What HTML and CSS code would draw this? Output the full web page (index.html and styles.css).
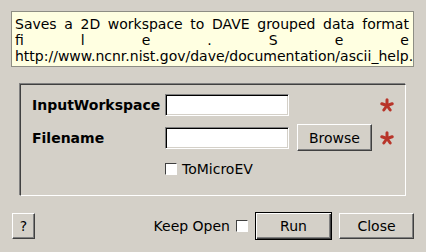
FILE: index.html
```html
<!DOCTYPE html>
<html>
<head>
<meta charset="utf-8">
<link rel="stylesheet" href="styles.css">
</head>
<body>
<div class="dialog">
  <div class="desc">
    <div class="line"><span>Saves</span><span>a</span><span>2D</span><span>workspace</span><span>to</span><span>DAVE</span><span>grouped</span><span>data</span><span>format</span></div>
    <div class="line"><span>fi</span><span>l</span><span>e</span><span>.</span><span>S</span><span>e</span><span>e</span></div>
    <div class="line"><span>http://www.ncnr.nist.gov/dave/documentation/ascii_help.</span></div>
  </div>

  <div class="group">
    <div class="label">InputWorkspace</div>
    <div class="input"></div>
    <div></div>
    <div class="star"><svg width="14" height="14" viewBox="0 0 14 14"><g stroke="#b8352a" stroke-width="3" stroke-linecap="round"><line x1="7" y1="7.5" x2="7" y2="1.8"/><line x1="7" y1="7.5" x2="12.2" y2="5.8"/><line x1="7" y1="7.5" x2="10.2" y2="12"/><line x1="7" y1="7.5" x2="3.8" y2="12"/><line x1="7" y1="7.5" x2="1.8" y2="5.8"/></g></svg></div>

    <div class="label">Filename</div>
    <div class="input"></div>
    <div class="btn browse">Browse</div>
    <div class="star"><svg width="14" height="14" viewBox="0 0 14 14"><g stroke="#b8352a" stroke-width="3" stroke-linecap="round"><line x1="7" y1="7.5" x2="7" y2="1.8"/><line x1="7" y1="7.5" x2="12.2" y2="5.8"/><line x1="7" y1="7.5" x2="10.2" y2="12"/><line x1="7" y1="7.5" x2="3.8" y2="12"/><line x1="7" y1="7.5" x2="1.8" y2="5.8"/></g></svg></div>

    <div></div>
    <div class="check-row"><span class="checkbox"></span><span>ToMicroEV</span></div>
  </div>

  <div class="footer">
    <div class="btn help">?</div>
    <div class="spacer"></div>
    <div class="keep"><span>Keep Open</span><span class="checkbox"></span></div>
    <div class="btn run">Run</div>
    <div class="btn close">Close</div>
  </div>
</div>
</body>
</html>
```

FILE: styles.css
```css
html, body {
  margin: 0;
  padding: 0;
  background: #d4d0c8;
}
body {
  width: 426px;
  height: 252px;
  overflow: hidden;
  font-family: "DejaVu Sans", sans-serif;
  font-size: 14px;
  color: #000;
}
.dialog {
  display: flex;
  flex-direction: column;
  padding: 11px 12px 0 11px;
}
.desc {
  width: 403px;
  box-sizing: border-box;
  background: #ffffe1;
  border: 1px solid #8e8e84;
  padding: 4px 4px 2px 3px;
}
.line {
  display: flex;
  justify-content: space-between;
  height: 16px;
  line-height: 16px;
  white-space: nowrap;
}
.group {
  margin: 17px 0 0 9px;
  width: 386px;
  height: 112px;
  box-sizing: border-box;
  border-top: 1px solid #404040;
  border-left: 1px solid #404040;
  border-right: 1px solid #fff;
  border-bottom: 1px solid #fff;
  box-shadow: -1px -1px 0 #808080;
  padding: 9px 0 0 11px;
  display: grid;
  grid-template-columns: 125px 124px 75px 14px;
  grid-template-rows: 22px 27px 20px;
  column-gap: 8px;
  row-gap: 8px;
  align-items: center;
}
.label {
  font-weight: bold;
  white-space: nowrap;
}
.input {
  height: 22px;
  box-sizing: border-box;
  background: #fff;
  border-top: 1px solid #808080;
  border-left: 1px solid #808080;
  border-right: 1px solid #fff;
  border-bottom: 1px solid #fff;
  box-shadow: inset 1px 1px 0 #000, inset -1px -1px 0 #d4d0c8;
}
.star {
  display: flex;
  justify-content: center;
  margin-left: -1px;
}
.star svg { display: block; }
.btn {
  box-sizing: border-box;
  display: flex;
  align-items: center;
  justify-content: center;
  border-top: 1px solid #fff;
  border-left: 1px solid #fff;
  border-right: 1px solid #404040;
  border-bottom: 1px solid #404040;
  box-shadow: inset -1px -1px 0 #808080;
  background: #d4d0c8;
}
.browse {
  height: 27px;
}
.check-row {
  grid-column: 2 / 4;
  display: flex;
  align-items: center;
  gap: 5px;
}
.checkbox {
  width: 12px;
  height: 12px;
  box-sizing: border-box;
  background: #fff;
  border-top: 1px solid #404040;
  border-left: 1px solid #404040;
  border-right: 1px solid #fff;
  border-bottom: 1px solid #fff;
}
.footer {
  display: flex;
  align-items: center;
  margin-top: 16px;
  padding-left: 1px;
}
.help {
  width: 23px;
  height: 26px;
}
.spacer { flex: 1; }
.keep {
  display: flex;
  align-items: center;
  gap: 6px;
  margin-right: 7px;
}
.run {
  width: 77px;
  height: 28px;
  border: 1px solid #000;
  box-shadow: inset 1px 1px 0 #fff, inset -1px -1px 0 #404040, inset -2px -2px 0 #808080;
}
.close {
  width: 75px;
  height: 26px;
  margin-left: 7px;
}
```
